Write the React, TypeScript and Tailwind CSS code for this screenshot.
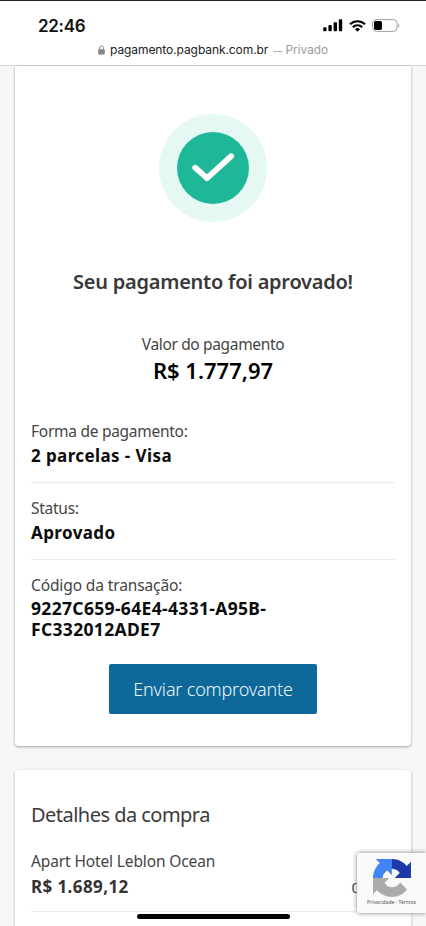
import type { ReactNode } from "react";

/* ───────────────────────── Icons ───────────────────────── */

const SignalIcon = () => (
  <svg viewBox="0 0 20 13" fill="currentColor" className="h-[13px] w-5">
    <rect x="0.2" y="8.2" width="3.4" height="4" rx="0.9" />
    <rect x="5.4" y="6" width="3.4" height="6.2" rx="0.9" />
    <rect x="10.6" y="3.2" width="3.4" height="9" rx="0.9" />
    <rect x="15.8" y="0.2" width="3.4" height="12" rx="0.9" />
  </svg>
);

const WifiIcon = () => (
  <svg viewBox="0 0 17 12" fill="none" stroke="currentColor" strokeWidth="2.2" className="h-3 w-[17px]">
    <path d="M1 4.3a10.7 10.7 0 0115 0" />
    <path d="M3.8 7.2a6.7 6.7 0 019.4 0" />
    <path d="M8.5 11.7L6 9.2a3.6 3.6 0 015 0z" fill="currentColor" stroke="none" />
  </svg>
);

const BatteryIcon = () => (
  <svg viewBox="0 0 28 13" fill="none" className="h-[13px] w-7">
    <rect x="0.6" y="0.6" width="24.4" height="11.8" rx="3.6" stroke="#a3a3a3" />
    <path d="M26.2 4.4c1.5.5 1.5 3.7 0 4.2z" fill="#a3a3a3" />
    <rect x="2" y="2" width="8" height="9" rx="1.8" fill="#000" />
  </svg>
);

const LockIcon = () => (
  <svg viewBox="0 0 7 10" fill="none" className="h-2.5 w-[7px]">
    <rect x="0.2" y="4.2" width="6.6" height="5.2" rx="1" fill="#848484" />
    <path d="M1.6 4.6V2.9a1.9 1.9 0 013.8 0v1.7" stroke="#848484" strokeWidth="1" />
  </svg>
);

const ApprovedIcon = () => (
  <svg viewBox="0 0 108 108" fill="none" className="size-[108px]">
    <circle cx="54" cy="54" r="54" fill="#e6f8f4" />
    <circle cx="54" cy="54" r="36" fill="#1eb899" />
    <path d="M36.2 53.7L48 64.2L72.2 42.2" stroke="#fff" strokeWidth="5.8" strokeLinecap="round" strokeLinejoin="round" />
  </svg>
);

const RecaptchaLogo = () => (
  <svg viewBox="0 0 64 64" className="size-[38px]">
    <path
      fill="#1c3aa9"
      d="M64 31.955l-.033-1.37V4.687l-7.16 7.16C50.948 4.674 42.033.093 32.05.093c-10.4 0-19.622 4.96-25.458 12.64l11.736 11.86a15.55 15.55 0 0 1 4.754-5.334c2.05-1.6 4.952-2.906 8.968-2.906.485 0 .86.057 1.135.163 4.976.393 9.288 3.14 11.828 7.124l-8.307 8.307L64 31.953"
    />
    <path
      fill="#4285f4"
      d="M31.862.094l-1.37.033H4.594l7.16 7.16C4.58 13.147 0 22.06 0 32.046c0 10.4 4.96 19.622 12.64 25.458L24.5 45.768a15.55 15.55 0 0 1-5.334-4.754c-1.6-2.05-2.906-4.952-2.906-8.968 0-.485.057-.86.163-1.135.393-4.976 3.14-9.288 7.124-11.828l8.307 8.307L31.86.095"
    />
    <path
      fill="#ababab"
      d="M.001 32.045l.033 1.37v25.898l7.16-7.16c5.86 7.173 14.774 11.754 24.76 11.754 10.4 0 19.622-4.96 25.458-12.64l-11.736-11.86a15.55 15.55 0 0 1-4.754 5.334c-2.05 1.6-4.952 2.906-8.968 2.906-.485 0-.86-.057-1.135-.163-4.976-.393-9.288-3.14-11.828-7.124l8.307-8.307c-10.522.04-22.4.066-27.295-.005"
    />
  </svg>
);

/* ───────────────────────── Sections ───────────────────────── */

const StatusBar = () => (
  <header className="h-[66px] shrink-0 border-t border-b border-t-[#232126] border-b-[#d4d4d4] bg-white font-['Inter',sans-serif]">
    <div className="flex h-[39px] items-center justify-between pt-2.5 pr-[26px] pl-[38px]">
      <span className="text-[17px] leading-5 font-semibold tracking-[-0.3px] text-[#111]">22:46</span>
      <div className="flex items-center gap-[6px] text-black">
        <SignalIcon />
        <WifiIcon />
        <BatteryIcon />
      </div>
    </div>
    <div className="flex h-5 items-center pl-[98px] text-[12px] leading-5 whitespace-nowrap">
      <LockIcon />
      <span className="ml-[5px] tracking-[-0.08px] text-[#222]">pagamento.pagbank.com.br</span>
      <span className="ml-[5px] text-[11.8px] text-[#9b9b9b]">
        <span className="text-[9px]">—</span> Privado
      </span>
    </div>
  </header>
);

const Detail = ({ label, children }: { label: string; children: ReactNode }) => (
  <div className="border-b border-[#ececec] pt-[15px] pb-4">
    <p className="text-[15.5px] leading-5 tracking-[-0.27px] text-[#444]">{label}</p>
    <p className="mt-[5px] text-[17px] leading-5 font-bold tracking-[0.4px] text-[#0c0c0c]">{children}</p>
  </div>
);

const Recaptcha = () => (
  <div className="absolute top-[853px] right-0 flex h-[60px] w-[69px] flex-col items-center rounded-l-[2px] bg-[#f9f9f9] pt-1.5 shadow-[0_0_5px_#808080]">
    <RecaptchaLogo />
    <p className="mt-[1px] text-[5px] leading-[8px] whitespace-nowrap text-[#555]">Privacidade - Termos</p>
  </div>
);

export default function App() {
  return (
    <div className="relative flex h-[926px] w-[426px] flex-col overflow-hidden bg-[#f7f7f7] font-['Noto_Sans',sans-serif]">
      <StatusBar />

      <main className="px-[15px]">
        <section className="flex h-[680px] flex-col rounded-b-[4px] bg-white px-4 pt-12 shadow-[0_1px_3px_rgba(0,0,0,0.35)]">
          <div className="flex justify-center">
            <ApprovedIcon />
          </div>
          <h1 className="mt-[46px] text-center text-[20px] leading-7 font-semibold tracking-[-0.25px] text-[#383838]">
            Seu pagamento foi aprovado!
          </h1>
          <p className="mt-[38px] text-center text-[15.5px] leading-5 tracking-[-0.35px] text-[#444]">Valor do pagamento</p>
          <p className="mt-[2px] text-center text-[22px] leading-7 font-semibold text-black">R$ 1.777,97</p>

          <div className="mt-[22px]">
            <Detail label="Forma de pagamento:">2 parcelas - Visa</Detail>
            <Detail label="Status:">Aprovado</Detail>
            <div className="pt-[15px]">
              <p className="text-[15.5px] leading-5 tracking-[-0.12px] text-[#444]">Código da transação:</p>
              <p className="mt-[3px] w-[250px] text-[17.5px] leading-[21px] font-bold tracking-[0.33px] text-[#0c0c0c]">
                9227C659-64E4-4331-A95B-FC332012ADE7
              </p>
            </div>
          </div>

          <button className="mt-6 h-[50px] w-52 self-center rounded-[2px] bg-[#0e6899] text-[18px] font-light tracking-[-0.18px] text-[#e8f5fb]">
            Enviar comprovante
          </button>
        </section>

        <section className="mt-6 h-[180px] rounded-t-[4px] bg-white px-4 pt-[31px] shadow-[0_1px_3px_rgba(0,0,0,0.3)]">
          <h2 className="text-[20px] leading-7 tracking-[-0.53px] text-[#3b3b3b]">Detalhes da compra</h2>
          <div className="mt-[22px] flex items-end justify-between border-b border-[#ececec] pb-[14px]">
            <div>
              <p className="text-[15.5px] leading-5 tracking-[-0.13px] text-[#444]">Apart Hotel Leblon Ocean</p>
              <p className="mt-[6px] text-[17px] leading-5 font-bold tracking-[0.4px] text-[#333]">R$ 1.689,12</p>
            </div>
            <span className="pr-[35px] text-[15px] leading-5 text-[#444]">0</span>
          </div>
        </section>
      </main>

      <Recaptcha />

      <div className="absolute top-[914px] left-[137px] h-[5px] w-[153px] rounded-full bg-black" />
    </div>
  );
}
